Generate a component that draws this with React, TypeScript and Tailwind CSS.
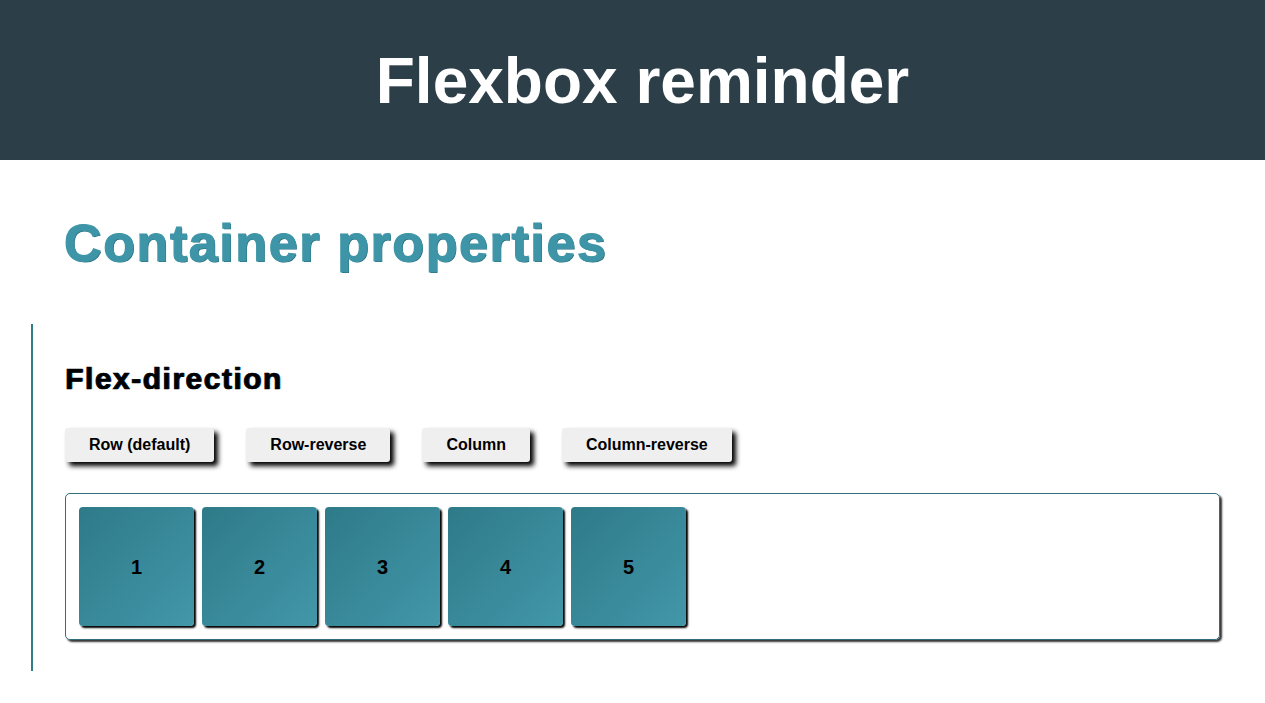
import React from "react";

const buttons = ["Row (default)", "Row-reverse", "Column", "Column-reverse"];
const items = [1, 2, 3, 4, 5];

export default function App() {
  return (
    <div className="min-h-[703px] bg-white font-['Liberation_Sans',Arial,sans-serif]">
      <header className="flex h-[160px] items-center justify-center bg-[#2c3e47] pl-[20px] pt-[2px]">
        <h1 className="text-[64px] font-bold leading-[74px] text-white">Flexbox reminder</h1>
      </header>
      <main className="pl-[31px] pr-[45px]">
        <h2 className="ml-[33px] mt-[53px] text-[52px] font-bold leading-[60px] tracking-[1.6px] text-[#3e95a7] [-webkit-text-stroke:1.2px_#3e95a7] [text-shadow:1px_1px_0_#256775]">
          Container properties
        </h2>
        <section className="mt-[51px] border-l-2 border-[#2f7e8a] pb-[31px] pl-[32px] pt-[37px]">
          <h3 className="text-[30px] font-bold leading-[35px] tracking-[1.5px] text-black [-webkit-text-stroke:0.7px_black] [text-shadow:1px_0_0_#2a5f9a]">
            Flex-direction
          </h3>
          <div className="mt-[32px] flex gap-[32px]">
            {buttons.map((b) => (
              <button
                key={b}
                className="flex h-[34px] items-center rounded-[3px] bg-[#efefef] px-[24px] text-[16px] font-bold text-black shadow-[4px_4px_5px_rgba(0,0,0,1)]"
              >
                {b}
              </button>
            ))}
          </div>
          <div className="mt-[31px] flex gap-[8px] rounded-[5px] border border-[#2f6e7a] p-[13px] shadow-[2px_2px_2px_rgba(0,0,0,0.8)]">
            {items.map((n) => (
              <div
                key={n}
                className="flex h-[119px] w-[115px] items-center justify-center rounded-[4px] bg-gradient-to-br from-[#2e7a89] to-[#4297a9] text-[20px] font-bold text-black shadow-[2px_2px_2px_#000]"
              >
                {n}
              </div>
            ))}
          </div>
        </section>
      </main>
    </div>
  );
}
